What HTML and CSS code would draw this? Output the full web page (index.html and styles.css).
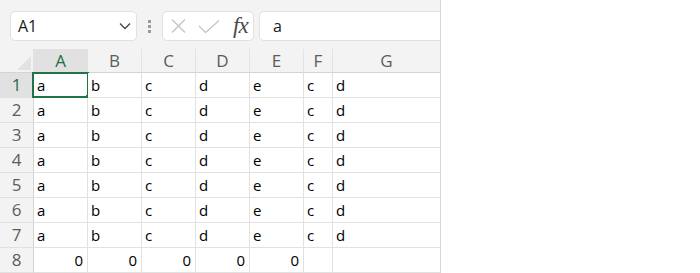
FILE: index.html
```html
<!DOCTYPE html>
<html lang="en">
<head>
    <meta charset="UTF-8">
    <title>Sheet</title>
    <link rel="stylesheet" href="styles.css">
</head>
<body>
    <div class="workbook">
        <div class="toolbar">
            <div class="name-box">
                <span>A1</span>
                <svg class="chevron" width="12" height="8" viewBox="0 0 12 8">
                    <path d="M1 1.5l5 5 5-5" fill="none" stroke="#444" stroke-width="1.3"/>
                </svg>
            </div>
            <div class="grip">
                <i></i><i></i><i></i>
            </div>
            <div class="fx-box">
                <svg width="15" height="14" viewBox="0 0 15 14">
                    <path d="M1 0.5l13 13M14 0.5l-13 13" stroke="#c4c4c4" stroke-width="1.3" fill="none"/>
                </svg>
                <svg width="22" height="13" viewBox="0 0 22 13">
                    <path d="M1 6l6.5 6.5L21 0.5" stroke="#c4c4c4" stroke-width="1.3" fill="none"/>
                </svg>
                <span class="fx">fx</span>
            </div>
            <div class="formula">a</div>
        </div>

        <div class="grid">
            <div class="corner">
                <svg width="14" height="14" viewBox="0 0 14 14">
                    <path d="M14 0V14H0z" fill="#e2e2e2"/>
                </svg>
            </div>
            <div class="col-head active">A</div>
            <div class="col-head">B</div>
            <div class="col-head">C</div>
            <div class="col-head">D</div>
            <div class="col-head">E</div>
            <div class="col-head">F</div>
            <div class="col-head">G</div>

            <div class="row-head active">1</div>
            <div class="cell selected">a<span class="sel"><span class="handle"></span></span></div>
            <div class="cell">b</div><div class="cell">c</div><div class="cell">d</div><div class="cell">e</div><div class="cell">c</div><div class="cell">d</div>

            <div class="row-head">2</div>
            <div class="cell">a</div><div class="cell">b</div><div class="cell">c</div><div class="cell">d</div><div class="cell">e</div><div class="cell">c</div><div class="cell">d</div>

            <div class="row-head">3</div>
            <div class="cell">a</div><div class="cell">b</div><div class="cell">c</div><div class="cell">d</div><div class="cell">e</div><div class="cell">c</div><div class="cell">d</div>

            <div class="row-head">4</div>
            <div class="cell">a</div><div class="cell">b</div><div class="cell">c</div><div class="cell">d</div><div class="cell">e</div><div class="cell">c</div><div class="cell">d</div>

            <div class="row-head">5</div>
            <div class="cell">a</div><div class="cell">b</div><div class="cell">c</div><div class="cell">d</div><div class="cell">e</div><div class="cell">c</div><div class="cell">d</div>

            <div class="row-head">6</div>
            <div class="cell">a</div><div class="cell">b</div><div class="cell">c</div><div class="cell">d</div><div class="cell">e</div><div class="cell">c</div><div class="cell">d</div>

            <div class="row-head">7</div>
            <div class="cell">a</div><div class="cell">b</div><div class="cell">c</div><div class="cell">d</div><div class="cell">e</div><div class="cell">c</div><div class="cell">d</div>

            <div class="row-head">8</div>
            <div class="cell num">0</div><div class="cell num">0</div><div class="cell num">0</div><div class="cell num">0</div><div class="cell num">0</div><div class="cell"></div><div class="cell"></div>
        </div>
    </div>
</body>
</html>
```

FILE: styles.css
```css
* {
    margin: 0;
    padding: 0;
    box-sizing: border-box;
}

body {
    background: #ffffff;
    font-family: 'Segoe UI', 'Open Sans', sans-serif;
    color: #000;
}

.workbook {
    width: 441px;
    height: 273px;
    background: #f3f3f3;
    border-right: 1px solid #d6d6d6;
    overflow: hidden;
}

/* Formula bar */
.toolbar {
    height: 49px;
    display: flex;
    align-items: flex-start;
    padding: 11px 0 0 10px;
}

.toolbar > * {
    flex-shrink: 0;
}

.name-box,
.fx-box,
.formula {
    height: 30px;
    background: #fff;
    border: 1px solid #e1e1e1;
    border-radius: 5px;
    display: flex;
    align-items: center;
}

.name-box {
    width: 127px;
    padding: 0 5px 0 7px;
    justify-content: space-between;
    font-size: 16px;
    color: #1a1a1a;
}

.grip {
    width: 25px;
    height: 30px;
    display: flex;
    flex-direction: column;
    align-items: center;
    justify-content: center;
    gap: 2px;
}

.grip i {
    width: 3px;
    height: 3px;
    background: #9a9a9a;
}

.fx-box {
    width: 92px;
    padding: 0 5px 0 8px;
    gap: 12px;
}

.fx {
    font-family: 'Liberation Serif', serif;
    font-style: italic;
    font-size: 23px;
    color: #4a4a4a;
    margin-left: 1px;
    letter-spacing: -1px;
}

.formula {
    margin-left: 5px;
    width: 300px;
    padding-left: 13px;
    font-size: 16px;
    color: #1a1a1a;
}

/* Sheet */
.grid {
    display: grid;
    grid-template-columns: 34px 54px 54px 54px 54px 54px 29px 108px;
    grid-template-rows: 24px repeat(8, 25px);
}

.corner {
    border-right: 1px solid #e1e1e1;
    border-bottom: 1px solid #d4d4d4;
    display: flex;
    align-items: flex-end;
    justify-content: flex-end;
    padding: 0 2px 2px 0;
}

.col-head {
    border-right: 1px solid #e3e3e3;
    border-bottom: 1px solid #d4d4d4;
    text-align: center;
    font-size: 17px;
    line-height: 23px;
    color: #5c5c5c;
}

.col-head:last-child {
    border-right: none;
}

.row-head {
    background: #f3f3f3;
    border-right: 1px solid #d4d4d4;
    border-bottom: 1px solid #e1e1e1;
    text-align: center;
    font-size: 17px;
    line-height: 24px;
    color: #5c5c5c;
}

.active {
    background: #e1e1e1;
    color: #1e6e45;
}

.cell {
    position: relative;
    background: #fff;
    border-right: 1px solid #e1e1e1;
    border-bottom: 1px solid #e1e1e1;
    font-size: 15px;
    line-height: 24px;
    padding: 0 4px 0 3px;
    white-space: nowrap;
}

.cell.num {
    text-align: right;
}

.sel {
    position: absolute;
    top: -1px;
    left: -2px;
    right: -2px;
    bottom: -1px;
    border: 2px solid #217346;
}

.handle {
    position: absolute;
    right: -4px;
    bottom: -4px;
    width: 5px;
    height: 5px;
    background: #217346;
}
```
